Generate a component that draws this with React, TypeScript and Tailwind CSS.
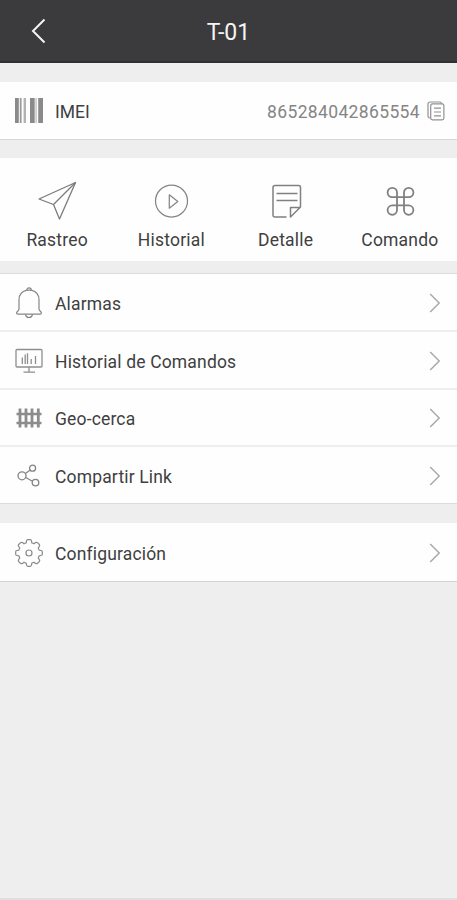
import React from 'react';

interface IconProps {
  className?: string;
}

interface MenuItem {
  label: string;
  icon: React.ReactNode;
}

function BackIcon({ className = '' }: IconProps) {
  return (
    <svg className={className} width="16" height="26" viewBox="0 0 16 26" fill="none" stroke="currentColor" strokeWidth="2">
      <path d="M13.5 1.5 2 13l11.5 11.5" />
    </svg>
  );
}

function BarcodeIcon() {
  return (
    <svg width="28" height="25" viewBox="0 0 28 25" fill="#8a8a8a">
      <path d="M0 0h3.8v25H0z" />
      <path d="M4.8 0h1.8v25H4.8z" opacity=".85" />
      <path d="M8.6 0h2.4v25H8.6z" opacity=".65" />
      <path d="M15 0h4.7v25H15z" />
      <path d="M20.5 0h1.2v25h-1.2z" opacity=".6" />
      <path d="M23.2 0h4.8v25h-4.8z" />
    </svg>
  );
}

function CopyIcon() {
  return (
    <svg width="18" height="20" viewBox="0 0 18 20" fill="none" stroke="#919191" strokeWidth="1.2">
      <rect x="3.7" y="2.9" width="13.2" height="16" rx="1.8" />
      <path d="M3.6 17H3A2 2 0 0 1 1 15V3a2 2 0 0 1 2-2h9.6a2 2 0 0 1 2 1.8" />
      <path d="M7 7.2h7M7 11h7M7 14.8h7" />
    </svg>
  );
}

function PlaneIcon() {
  return (
    <svg width="40" height="40" viewBox="0 0 40 40" fill="none" stroke="#7b7b7b" strokeWidth="1.3" strokeLinejoin="round">
      <path d="M2 18 38.5 1.5 22.5 38l-6-14.5z" />
      <path d="m16.5 23.5 22-22" />
    </svg>
  );
}

function PlayIcon() {
  return (
    <svg width="40" height="40" viewBox="0 0 40 40" fill="none" stroke="#858585" strokeWidth="1.25" strokeLinejoin="round">
      <circle cx="20.5" cy="20" r="16" />
      <path d="M18.3 13.8v13.4l8.5-6.7z" />
    </svg>
  );
}

function NoteIcon() {
  return (
    <svg width="40" height="40" viewBox="0 0 40 40" fill="none" stroke="#808080" strokeWidth="1.5" strokeLinejoin="round">
      <path d="M20.5 36H9a2 2 0 0 1-2-2V6.5a2 2 0 0 1 2-2h23.5a2 2 0 0 1 2 2V26L24.5 36v-9.500H34" />
      <path d="M10.5 12.5h21M10.5 19.500h21" />
    </svg>
  );
}

function CommandIcon() {
  return (
    <svg width="40" height="40" viewBox="0 0 40 40" fill="none" stroke="#808080" strokeWidth="1.8">
      <path d="M17 11.5v17.600a4.700 4.700 0 1 1-4.700-4.700h16.400a4.700 4.700 0 1 1-4.700 4.700V11.500a4.700 4.700 0 1 1 4.700 4.700H12.300A4.700 4.700 0 1 1 17 11.500z" />
    </svg>
  );
}

function BellIcon() {
  return (
    <svg width="28" height="32" viewBox="0 0 28 32" fill="none" stroke="#858585" strokeWidth="1.2" strokeLinejoin="round">
      <path d="M11.7 3.2a2.3 2.3 0 0 1 4.6 0c4.7 1.300 7.7 4.800 7.700 9.500v9.600c0 1.400 2.400 2 2.400 3.700 0 .8-.5 1.200-1.200 1.200H2.800c-.7 0-1.200-.4-1.200-1.200 0-1.700 2.400-2.300 2.400-3.700v-9.600c0-4.700 3-8.200 7.700-9.500z" />
      <path d="M11.500 3.300q2.500-.5 5 0M10.500 27.300c.3 2 1.600 3.200 3.500 3.200s3.200-1.200 3.500-3.200" />
    </svg>
  );
}

function MonitorIcon() {
  return (
    <svg width="28" height="26" viewBox="0 0 28 26" fill="none" stroke="#8e8e8e" strokeWidth="1.3">
      <rect x="1" y="1.500" width="26" height="17.500" rx="1" />
      <path d="M14 19v5M8.500 24.200h11.500" />
      <path d="M7.300 9.500v6.500M10.200 6.500v9.500M12.500 5.200v10.800M16.200 11v5M20.500 8v8" />
    </svg>
  );
}

function FenceIcon() {
  return (
    <svg width="28" height="22" viewBox="0 0 28 22" fill="none" stroke="#8c8c8c">
      <path d="M1.500 7h25M1.500 16h25" strokeWidth="2.300" />
      <path d="M5 1.500v19M11 1.500v19M17 1.500v19M23.300 1.500v19" strokeWidth="2.800" />
    </svg>
  );
}

function ShareIcon() {
  return (
    <svg width="28" height="26" viewBox="0 0 28 26" fill="none" stroke="#858585" strokeWidth="1.3">
      <circle cx="7" cy="12.800" r="4" />
      <circle cx="17.600" cy="5.200" r="3" />
      <circle cx="20.500" cy="19.600" r="3.300" />
      <path d="m10.300 10.500 5-3.500M10.700 14.500l6.800 3.800" />
    </svg>
  );
}

function GearIcon() {
  return (
    <svg width="28" height="28" viewBox="0 0 28 28" fill="none" stroke="#8a8a8a" strokeWidth="1.2" strokeLinejoin="round">
      <path d="M11.500 2q.2-1.300 1.300-1.300h2.400q1.100 0 1.300 1.300l.3 1.900q1.200.3 2.200.9l1.600-1.200q1-.7 1.900.1l1.800 1.800q.8.9.1 1.900l-1.200 1.600q.6 1 .9 2.200l1.900.3q1.300.2 1.300 1.300v2.400q0 1.100-1.300 1.300l-1.900.3q-.3 1.200-.9 2.200l1.200 1.600q.7 1-.1 1.900l-1.800 1.800q-.9.8-1.900.1L19 23.200q-1 .6-2.200.9l-.3 1.900q-.2 1.300-1.300 1.300h-2.400q-1.100 0-1.300-1.300l-.3-1.900q-1.200-.3-2.200-.9l-1.600 1.200q-1 .7-1.900-.1l-1.800-1.800q-.8-.9-.1-1.900L4.800 19q-.6-1-.9-2.200L2 16.500q-1.300-.2-1.300-1.300v-2.400q0-1.100 1.300-1.300l1.900-.3q.3-1.200.9-2.200L3.600 7.400q-.7-1 .1-1.900l1.800-1.800q.9-.8 1.900-.1L9 4.800q1-.6 2.200-.9z" />
      <circle cx="14" cy="14" r="3" />
    </svg>
  );
}

function ChevronIcon() {
  return (
    <svg width="12" height="20" viewBox="0 0 12 20" fill="none" stroke="#a6a6a6" strokeWidth="1.4">
      <path d="m1.200 1 9 9-9 9" />
    </svg>
  );
}

const actions: MenuItem[] = [
  { label: 'Rastreo', icon: <PlaneIcon /> },
  { label: 'Historial', icon: <PlayIcon /> },
  { label: 'Detalle', icon: <NoteIcon /> },
  { label: 'Comando', icon: <CommandIcon /> },
];

const options: MenuItem[] = [
  { label: 'Alarmas', icon: <BellIcon /> },
  { label: 'Historial de Comandos', icon: <MonitorIcon /> },
  { label: 'Geo-cerca', icon: <FenceIcon /> },
  { label: 'Compartir Link', icon: <ShareIcon /> },
];

function MenuRow({ label, icon }: MenuItem) {
  return (
    <button className="flex min-h-0 w-full flex-1 items-center pt-0.5 pr-4 pl-[15px] text-left">
      <span className="flex w-7 justify-center">{icon}</span>
      <span className="ml-3 flex-1 pt-0.5 text-[17.5px] tracking-[0.16px]">{label}</span>
      <ChevronIcon />
    </button>
  );
}

export default function App() {
  return (
    <div className="flex h-[900px] w-full flex-col border-b-2 border-[#dfdfdf] bg-[#eeeeee] font-[Roboto,sans-serif] text-[#404040]">
      <header className="grid h-[63px] shrink-0 grid-cols-[1fr_auto_1fr] items-center border-b-2 border-[#303032] bg-[#3b3b3d] text-[#f4f4f4]">
        <BackIcon className="ml-[31px]" />
        <h1 className="mt-1.5 text-[23px]">T-01</h1>
      </header>

      <section className="mt-[19px] flex h-[58px] shrink-0 items-center border-b border-[#d6d6d6] bg-[#fefefe] pr-3 pl-[15px]">
        <BarcodeIcon />
        <span className="ml-3 flex-1 pt-[3px] text-[17.5px]">IMEI</span>
        <span className="pt-[3px] text-[17.5px] tracking-[0.36px] text-[#858585]">865284042865554</span>
        <span className="ml-[7px]">
          <CopyIcon />
        </span>
      </section>

      <nav className="mt-[18px] grid h-[103px] shrink-0 grid-cols-4 bg-[#fefefe] pt-[23px]">
        {actions.map((action) => (
          <button key={action.label} className="flex flex-col items-center">
            {action.icon}
            <span className="mt-[6px] text-[17.5px] leading-[26px] tracking-[0.2px]">{action.label}</span>
          </button>
        ))}
      </nav>

      <section className="mt-3 flex h-[231px] shrink-0 flex-col divide-y-2 divide-[#eeeeee] border-y border-[#dcdcdc] bg-[#fefefe]">
        {options.map((option) => (
          <MenuRow key={option.label} {...option} />
        ))}
      </section>

      <section className="mt-[19px] flex h-[59px] shrink-0 border-b border-[#d3d3d3] bg-[#fefefe]">
        <MenuRow label="Configuración" icon={<GearIcon />} />
      </section>
    </div>
  );
}
